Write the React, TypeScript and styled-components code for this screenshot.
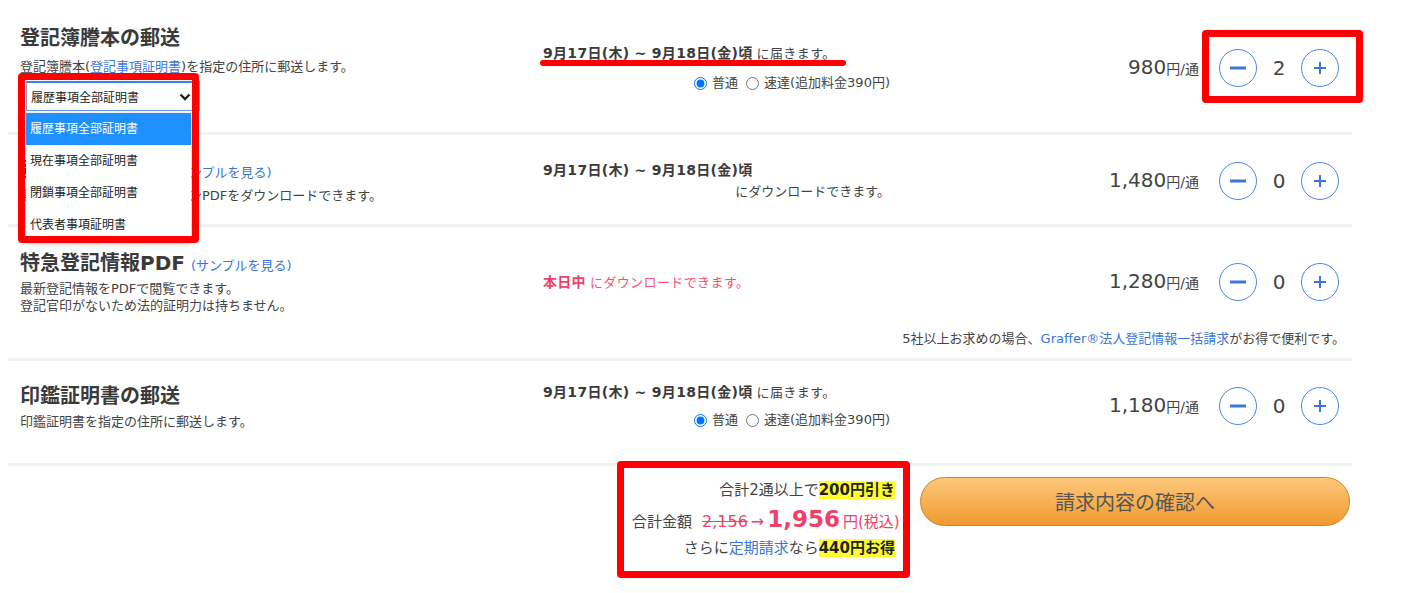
import styled, { createGlobalStyle } from "styled-components";

const GlobalStyle = createGlobalStyle`
  body {
    margin: 0;
    background: #fff;
    color: #444;
    font-family: "DejaVu Sans", "Noto Sans CJK JP", sans-serif;
  }
`;

const Page = styled.div`
  width: 1344px;
  margin-left: 8px;
`;

const Row = styled.div<{ $pt: number; $pb: number }>`
  display: grid;
  grid-template-columns: 523px 350px 1fr 120px;
  align-items: center;
  padding: ${(p) => p.$pt}px 13px ${(p) => p.$pb}px 12px;
  border-bottom: 3px solid #f2f2f2;
`;

const Title = styled.div`
  font-size: 20px;
  font-weight: bold;
  line-height: 26px;
  height: 26px;
  color: #3a3a3a;
  white-space: nowrap;
`;

const Link = styled.a<{ $size?: number }>`
  color: #3a76d8;
  font-weight: normal;
  font-size: ${(p) => p.$size ?? 13}px;
  text-decoration: none;
`;

const TitleLink = styled(Link)`
  margin-left: 6px;
`;

const Desc = styled.div<{ $mt?: number }>`
  margin-top: ${(p) => p.$mt ?? 4}px;
  font-size: 13px;
  line-height: 17px;
  color: #444;
  white-space: nowrap;
`;

const SelectWrap = styled.div`
  position: relative;
  margin: 6px 0 0 6px;
  width: 174px;
`;

const SelectBox = styled.div`
  box-sizing: border-box;
  height: 30px;
  display: flex;
  align-items: center;
  justify-content: space-between;
  padding: 0 8px 0 4px;
  border: 1px solid #6a9ee8;
  border-top: 2px solid #3b82f0;
  background: #fff;
  font-size: 12px;
  color: #222;
`;

const OptionList = styled.ul`
  position: absolute;
  top: 32px;
  left: 0;
  width: 165px;
  margin: 0;
  padding: 0;
  list-style: none;
  background: #fff;
  box-shadow: 0 2px 6px rgba(0, 0, 0, 0.3);
  z-index: 5;
`;

const OptionItem = styled.li<{ $active?: boolean }>`
  height: 32px;
  line-height: 32px;
  padding-left: 4px;
  font-size: 12px;
  color: ${(p) => (p.$active ? "#fff" : "#222")};
  background: ${(p) => (p.$active ? "#1e90ff" : "#fff")};
`;

const DropdownFrame = styled.div`
  position: absolute;
  left: -8px;
  top: -8px;
  width: 181px;
  height: 170px;
  box-sizing: border-box;
  border: 7px solid #f00;
  border-radius: 4px;
  z-index: 6;
  pointer-events: none;
`;

const Middle = styled.div`
  display: flex;
  flex-direction: column;
`;

const DateLine = styled.div`
  position: relative;
  line-height: 20px;
  height: 20px;
  white-space: nowrap;
  color: #3a3a3a;
`;

const DateStrong = styled.strong<{ $pink?: boolean }>`
  font-size: 14px;
  font-weight: bold;
  letter-spacing: 0.3px;
  color: ${(p) => (p.$pink ? "#f0406a" : "#3a3a3a")};
`;

const DateSuffix = styled.span<{ $pink?: boolean }>`
  font-size: 13px;
  margin-left: 4px;
  letter-spacing: 0.4px;
  color: ${(p) => (p.$pink ? "#f25574" : "#444")};
`;

const Underline = styled.span`
  position: absolute;
  left: -3px;
  top: 17px;
  width: 306px;
  height: 6px;
  border-radius: 3px;
  background: #f00;
`;

const SubLine = styled.div<{ $mt: number }>`
  display: flex;
  justify-content: flex-end;
  align-items: center;
  height: 20px;
  margin-top: ${(p) => p.$mt}px;
  padding-right: 3px;
  font-size: 13px;
  line-height: 20px;
  color: #444;
  white-space: nowrap;
`;

const Radio = styled.input`
  width: 13px;
  height: 13px;
  margin: 0 5px 0 8px;
`;

const Price = styled.div`
  text-align: right;
  padding-right: 20px;
  white-space: nowrap;
  color: #444;
  line-height: 28px;
`;

const PriceNum = styled.span`
  font-size: 20px;
`;

const PriceUnit = styled.span`
  font-size: 14px;
`;

const Controls = styled.div<{ $marked?: boolean }>`
  position: relative;
  display: flex;
  align-items: center;

  &::after {
    content: "";
    display: ${(p) => (p.$marked ? "block" : "none")};
    position: absolute;
    inset: -19px -24px -16px -17px;
    border: 7px solid #f00;
    border-radius: 4px;
  }
`;

const Circle = styled.button`
  width: 38px;
  height: 38px;
  padding: 0;
  border: 1px solid #4a86e8;
  border-radius: 50%;
  background: #fff;
  display: flex;
  align-items: center;
  justify-content: center;
`;

const Count = styled.span`
  width: 44px;
  text-align: center;
  font-size: 20px;
  color: #444;
`;

const Note = styled.div`
  grid-column: 1 / -1;
  margin: 16px -6px 0 0;
  text-align: right;
  font-size: 13px;
  line-height: 17px;
  height: 17px;
  color: #444;
  white-space: nowrap;
`;

const Footer = styled.div`
  display: flex;
  justify-content: flex-end;
  align-items: flex-start;
  gap: 10px;
  padding-right: 2px;
`;

const Summary = styled.div`
  width: 293px;
  box-sizing: border-box;
  margin-top: -5px;
  padding: 9px 8px 10px;
  border: 7px solid #f00;
  border-radius: 4px;
  text-align: right;
  color: #444;
  white-space: nowrap;
`;

const SumLine = styled.div<{ $h: number }>`
  font-size: 15px;
  line-height: ${(p) => p.$h}px;
  height: ${(p) => p.$h}px;
`;

const Mark = styled.strong`
  color: #222;
  background: #ffff2e;
  font-weight: bold;
`;

const OldPrice = styled.span`
  margin-left: 10px;
  font-size: 16px;
  color: #f0406a;
  text-decoration: line-through;
`;

const Arrow = styled.span`
  font-size: 16px;
  color: #f0406a;
  margin: 0 3px;
`;

const NewPrice = styled.strong`
  font-size: 23px;
  color: #f0406a;
`;

const Tax = styled.span`
  margin-left: 3px;
  font-size: 15px;
  color: #f0406a;
`;

const ConfirmButton = styled.button`
  margin-top: 11px;
  width: 430px;
  height: 49px;
  border: 1px solid #c8862a;
  border-radius: 25px;
  background: linear-gradient(#fdc87b, #f09a2e);
  font-family: "DejaVu Sans", "Noto Sans CJK JP", sans-serif;
  font-size: 20px;
  color: #555;
`;

const MinusIcon = () => (
  <svg width="18" height="18" viewBox="0 0 18 18">
    <rect x="1" y="7.5" width="16" height="3" fill="#3a76d8" />
  </svg>
);

const PlusIcon = () => (
  <svg width="14" height="14" viewBox="0 0 14 14">
    <rect x="1" y="6" width="12" height="2" fill="#3a76d8" />
    <rect x="6" y="1" width="2" height="12" fill="#3a76d8" />
  </svg>
);

const Chevron = () => (
  <svg width="12" height="8" viewBox="0 0 12 8">
    <path d="M1.5 1.5 L6 6 L10.5 1.5" fill="none" stroke="#222" strokeWidth="2.4" />
  </svg>
);

function Stepper({ count, marked }: { count: number; marked?: boolean }) {
  return (
    <Controls $marked={marked}>
      <Circle>
        <MinusIcon />
      </Circle>
      <Count>{count}</Count>
      <Circle>
        <PlusIcon />
      </Circle>
    </Controls>
  );
}

function PriceTag({ value }: { value: string }) {
  return (
    <Price>
      <PriceNum>{value}</PriceNum>
      <PriceUnit>円/通</PriceUnit>
    </Price>
  );
}

function SpeedChoice({ mt }: { mt: number }) {
  return (
    <SubLine $mt={mt}>
      <Radio type="radio" checked readOnly />
      普通
      <Radio type="radio" readOnly />
      速達(追加料金390円)
    </SubLine>
  );
}

const options = ["履歴事項全部証明書", "現在事項全部証明書", "閉鎖事項全部証明書", "代表者事項証明書"];

export default function App() {
  return (
    <>
      <GlobalStyle />
      <Page>
        <Row $pt={25} $pb={21}>
          <div>
            <Title>登記簿謄本の郵送</Title>
            <Desc $mt={7}>
              登記簿謄本(<Link>登記事項証明書</Link>)を指定の住所に郵送します。
            </Desc>
            <SelectWrap>
              <SelectBox>
                履歴事項全部証明書
                <Chevron />
              </SelectBox>
              <OptionList>
                {options.map((o, i) => (
                  <OptionItem key={o} $active={i === 0}>
                    {o}
                  </OptionItem>
                ))}
              </OptionList>
              <DropdownFrame />
            </SelectWrap>
          </div>
          <Middle>
            <DateLine>
              <DateStrong>9月17日(木) ~ 9月18日(金)頃</DateStrong>
              <DateSuffix>に届きます。</DateSuffix>
              <Underline />
            </DateLine>
            <SpeedChoice mt={10} />
          </Middle>
          <PriceTag value="980" />
          <Stepper count={2} marked />
        </Row>

        <Row $pt={22} $pb={20}>
          <div>
            <Title>
              登記簿謄本PDF<TitleLink>(サンプルを見る)</TitleLink>
            </Title>
            <Desc>郵送する登記簿謄本のスキャンPDFをダウンロードできます。</Desc>
          </div>
          <Middle>
            <DateLine>
              <DateStrong>9月17日(木) ~ 9月18日(金)頃</DateStrong>
            </DateLine>
            <SubLine $mt={2}>にダウンロードできます。</SubLine>
          </Middle>
          <PriceTag value="1,480" />
          <Stepper count={0} />
        </Row>

        <Row $pt={23} $pb={11}>
          <div>
            <Title>
              特急登記情報PDF<TitleLink>(サンプルを見る)</TitleLink>
            </Title>
            <Desc>
              最新登記情報をPDFで閲覧できます。
              <br />
              登記官印がないため法的証明力は持ちません。
            </Desc>
          </div>
          <Middle>
            <DateLine>
              <DateStrong $pink>本日中</DateStrong>
              <DateSuffix $pink>にダウンロードできます。</DateSuffix>
            </DateLine>
          </Middle>
          <PriceTag value="1,280" />
          <Stepper count={0} />
          <Note>
            5社以上お求めの場合、<Link $size={13}>Graffer®法人登記情報一括請求</Link>がお得で便利です。
          </Note>
        </Row>

        <Row $pt={21} $pb={33}>
          <div>
            <Title>印鑑証明書の郵送</Title>
            <Desc>印鑑証明書を指定の住所に郵送します。</Desc>
          </div>
          <Middle>
            <DateLine>
              <DateStrong>9月17日(木) ~ 9月18日(金)頃</DateStrong>
              <DateSuffix>に届きます。</DateSuffix>
            </DateLine>
            <SpeedChoice mt={8} />
          </Middle>
          <PriceTag value="1,180" />
          <Stepper count={0} />
        </Row>

        <Footer>
          <Summary>
            <SumLine $h={26}>
              合計2通以上で<Mark>200円引き</Mark>
            </SumLine>
            <SumLine $h={32}>
              合計金額
              <OldPrice>2,156</OldPrice>
              <Arrow>→</Arrow>
              <NewPrice>1,956</NewPrice>
              <Tax>円(税込)</Tax>
            </SumLine>
            <SumLine $h={26}>
              さらに<Link $size={15}>定期請求</Link>なら<Mark>440円お得</Mark>
            </SumLine>
          </Summary>
          <ConfirmButton>請求内容の確認へ</ConfirmButton>
        </Footer>
      </Page>
    </>
  );
}
